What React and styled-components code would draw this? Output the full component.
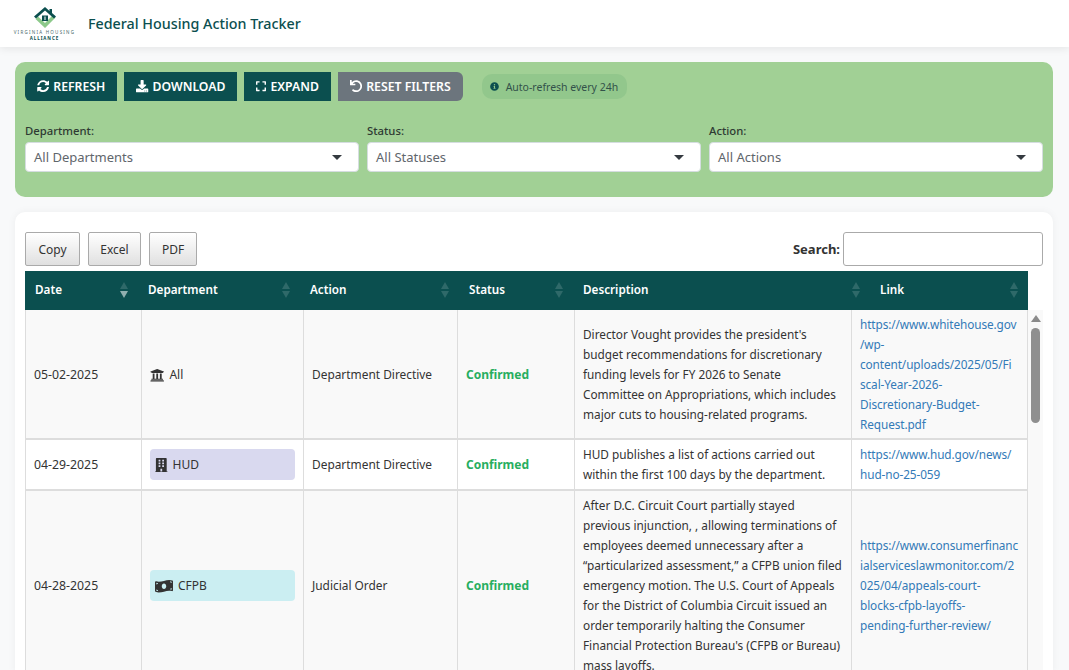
import React from "react";
import styled, { createGlobalStyle } from "styled-components";
import {
  FaSyncAlt,
  FaDownload,
  FaExpand,
  FaUndo,
  FaInfoCircle,
  FaUniversity,
  FaBuilding,
  FaMoneyBillWave,
} from "react-icons/fa";

const GlobalStyle = createGlobalStyle`
  html, body {
    margin: 0;
    height: 100%;
    overflow: hidden;
    background: #f8f9fa;
    font-family: "Noto Sans", "Open Sans", sans-serif;
    color: #212529;
  }
  * { box-sizing: border-box; }
`;

const Page = styled.div`
  height: 670px;
  overflow: hidden;
`;

const Header = styled.header`
  height: 47px;
  background: #fff;
  display: flex;
  align-items: center;
  padding-left: 15px;
  box-shadow: 0 2px 8px rgba(0, 0, 0, 0.08);
`;

const Logo = styled.div`
  width: 59px;
  display: flex;
  flex-direction: column;
  align-items: center;
  margin-right: 14px;
`;

const LogoLine = styled.span`
  font-size: ${(p) => p.$size}px;
  line-height: ${(p) => p.$height}px;
  letter-spacing: ${(p) => p.$spacing}px;
  font-weight: ${(p) => p.$weight};
  color: ${(p) => p.$color};
  white-space: nowrap;
`;

const Title = styled.h1`
  margin: 0 0 1px;
  font-size: 14.3px;
  font-weight: 500;
  color: #0b4f4f;
`;

const Main = styled.main`
  padding: 15px 16px 0 15px;
  display: flex;
  flex-direction: column;
  gap: 15px;
`;

const FilterPanel = styled.section`
  height: 135px;
  background: #a1d095;
  border-radius: 10px;
  padding: 10px;
`;

const Toolbar = styled.div`
  display: flex;
  align-items: center;
  gap: 7px;
`;

const ActionButton = styled.button`
  height: 29px;
  padding: 0 12px;
  display: inline-flex;
  align-items: center;
  gap: 4px;
  border: 0;
  border-radius: ${(p) => p.$radius};
  background: ${(p) => (p.$muted ? "#6c757d" : "#0b4f4f")};
  color: #fff;
  font-family: inherit;
  font-size: 12.25px;
  font-weight: 600;

  svg {
    width: ${(p) => p.$iconWidth || 12.25}px;
    height: 12.25px;
  }
`;

const RefreshNote = styled.div`
  margin-left: 12px;
  height: 25px;
  padding: 0 9px 0 8px;
  display: inline-flex;
  align-items: center;
  gap: 7px;
  border-radius: 10px;
  background: rgba(46, 139, 87, 0.13);
  color: #33524a;
  font-size: 10.5px;

  svg {
    font-size: 9px;
    color: #0b4f4f;
  }
`;

const Filters = styled.div`
  display: grid;
  grid-template-columns: repeat(3, 1fr);
  gap: 8px;
  margin-top: 22px;
`;

const FilterField = styled.label`
  display: flex;
  flex-direction: column;
  font-size: 11.3px;
  font-weight: 500;
  color: #2e3a33;
  gap: 4px;
`;

const SelectBox = styled.div`
  height: 30px;
  padding: 0 8px;
  background: #fff;
  border: 1px solid #d5dde0;
  border-radius: 4px;
  display: flex;
  align-items: center;
  justify-content: space-between;
  color: #5f666c;
  font-size: 13px;
  font-weight: 400;
`;

const Caret = styled.span`
  width: 0;
  height: 0;
  margin-right: 8px;
  border-left: 5px solid transparent;
  border-right: 5px solid transparent;
  border-top: 5px solid #343a40;
`;

const TableCard = styled.section`
  background: #fff;
  border-radius: 10px 10px 0 0;
  padding: 20px 10px 0;
  height: 460px;
  box-shadow: 0 0 8px rgba(0, 0, 0, 0.05);
  overflow: hidden;
`;

const TableTools = styled.div`
  display: flex;
  align-items: center;
  justify-content: space-between;
  height: 34px;
  margin-bottom: 5px;
`;

const ExportGroup = styled.div`
  display: flex;
  gap: 8px;
`;

const ExportButton = styled.button`
  width: ${(p) => p.$width}px;
  height: 34px;
  padding: 0;
  border: 1px solid #aaa;
  border-radius: 2px;
  background: linear-gradient(to bottom, #fff 0%, #e0e0e0 100%);
  color: #333;
  font-family: inherit;
  font-size: 12px;
`;

const SearchLabel = styled.label`
  display: flex;
  align-items: center;
  gap: 3px;
  font-size: 13px;
  font-weight: 700;
  color: #333;
`;

const SearchInput = styled.input`
  width: 200px;
  height: 34px;
  border: 1px solid #aaa;
  border-radius: 3px;
  background: #fff;
`;

const HeadTable = styled.table`
  width: 1003px;
  border-collapse: separate;
  border-spacing: 0;
  table-layout: fixed;
`;

const HeadCell = styled.th`
  position: relative;
  height: 39px;
  padding: 0 10px 3px;
  background: #0b4f4f;
  color: #fff;
  font-size: 11.7px;
  font-weight: 600;
  text-align: left;
`;

const SortArrows = styled.span`
  position: absolute;
  right: 10px;
  top: 11px;
  display: flex;
  flex-direction: column;
  gap: 2px;

  &::before,
  &::after {
    content: "";
    border-left: 4.5px solid transparent;
    border-right: 4.5px solid transparent;
  }
  &::before {
    border-bottom: 7px solid rgba(255, 255, 255, 0.15);
  }
  &::after {
    border-top: 7px solid ${(p) => (p.$active ? "rgba(255, 255, 255, 0.55)" : "rgba(255, 255, 255, 0.15)")};
  }
`;

const ScrollArea = styled.div`
  display: flex;
  align-items: flex-start;
`;

const Table = styled.table`
  width: 1003px;
  flex: none;
  border-collapse: separate;
  border-spacing: 0;
  table-layout: fixed;
  font-size: 11.8px;
`;

const Row = styled.tr`
  height: ${(p) => p.$height}px;
  background: ${(p) => (p.$odd ? "#f9f9f9" : "#fff")};

  td {
    padding-bottom: ${(p) => p.$bottom}px;
  }
`;

const Cell = styled.td`
  padding: 4px 8px;
  border-right: 1px solid #ddd;
  border-bottom: 2px solid #ddd;
  line-height: 20px;
  vertical-align: middle;
  color: #333;
  overflow-wrap: anywhere;

  &:first-child {
    border-left: 1px solid #ddd;
  }
`;

const DateCell = styled(Cell)`
  padding-top: 5px;
  font-size: 12.3px;
`;

const ActionCell = styled(Cell)`
  font-size: 11.9px;
`;

const Confirmed = styled.span`
  color: #27ae60;
  font-size: 12px;
  font-weight: 700;
`;

const DeptTag = styled.div`
  display: flex;
  align-items: center;
  gap: 5px;
  padding: 2px ${(p) => (p.$bg ? "5px" : "0")} 0;
  height: ${(p) => (p.$bg ? "31px" : "auto")};
  border-radius: 4px;
  background: ${(p) => p.$bg || "transparent"};
  font-size: 12px;

  svg {
    width: ${(p) => p.$iconWidth}px;
    height: 14.4px;
    color: #333;
    flex: none;
  }
`;

const ExternalLink = styled.a`
  color: #337ab7;
  letter-spacing: -0.1px;
  text-decoration: none;
  white-space: pre-line;
`;

const Scrollbar = styled.div`
  width: 15px;
  flex: none;
  height: 360px;
  display: flex;
  flex-direction: column;
  align-items: center;
  background: #f9f9f9;
`;

const ScrollUp = styled.span`
  margin-top: 5px;
  border-left: 5px solid transparent;
  border-right: 5px solid transparent;
  border-bottom: 7px solid #8a8a8a;
`;

const ScrollThumb = styled.span`
  margin-top: 6px;
  width: 9px;
  height: 95px;
  border-radius: 5px;
  background: #8f8f8f;
`;

const headColumns = [
  { label: "Date", width: 113, active: true },
  { label: "Department", width: 162 },
  { label: "Action", width: 159 },
  { label: "Status", width: 114 },
  { label: "Description", width: 297 },
  { label: "Link", width: 158 },
];

const bodyWidths = [117, 162, 154, 117, 277, 176];

const rows = [
  {
    date: "05-02-2025",
    dept: "All",
    icon: <FaUniversity />,
    iconWidth: 14.4,
    height: 130,
    bottom: 4,
    action: "Department Directive",
    description:
      "Director Vought provides the president's budget recommendations for discretionary funding levels for FY 2026 to Senate Committee on Appropriations, which includes major cuts to housing-related programs.",
    link: "https://www.whitehouse.gov\n/wp-\ncontent/uploads/2025/05/Fi\nscal-Year-2026-\nDiscretionary-Budget-\nRequest.pdf",
  },
  {
    date: "04-29-2025",
    dept: "HUD",
    bg: "#d9d9ef",
    icon: <FaBuilding />,
    iconWidth: 12.6,
    height: 51,
    bottom: 5,
    action: "Department Directive",
    description:
      "HUD publishes a list of actions carried out within the first 100 days by the department.",
    link: "https://www.hud.gov/news/\nhud-no-25-059",
  },
  {
    date: "04-28-2025",
    dept: "CFPB",
    bg: "#cbeef2",
    icon: <FaMoneyBillWave />,
    iconWidth: 18,
    height: 188,
    bottom: 4,
    action: "Judicial Order",
    description:
      "After D.C. Circuit Court partially stayed previous injunction, , allowing terminations of employees deemed unnecessary after a “particularized assessment,” a CFPB union filed emergency motion. The U.S. Court of Appeals for the District of Columbia Circuit issued an order temporarily halting the Consumer Financial Protection Bureau's (CFPB or Bureau) mass layoffs.",
    link: "https://www.consumerfinancialserviceslawmonitor.com/2025/04/appeals-court-\nblocks-cfpb-layoffs-\npending-further-review/",
  },
];

function LogoMark() {
  return (
    <svg width="30" height="23" viewBox="0 0 30 23">
      <path d="M8 10.5 15 17l8-8 2.5 2.5L15 22 5.500 13z" fill="#8cc98a" />
      <path d="M15 1 4 10.500l2 2 9-8 9 8 2-2-4-3.500V3h-2.500v2z" fill="#0b4f4f" />
      <path d="M12 9.500h6V15h-6z" fill="#0b4f4f" />
      <path d="M14.500 10.500h1V14h-1z" fill="#fff" />
    </svg>
  );
}

export default function App() {
  return (
    <Page>
      <GlobalStyle />
      <Header>
        <Logo>
          <LogoMark />
          <LogoLine $size={4.5} $height={6} $spacing={1.25} $weight={400} $color="#4a6b6b">
            VIRGINIA HOUSING
          </LogoLine>
          <LogoLine $size={4.5} $height={6} $spacing={0.9} $weight={700} $color="#0b4f4f">
            ALLIANCE
          </LogoLine>
        </Logo>
        <Title>Federal Housing Action Tracker</Title>
      </Header>
      <Main>
        <FilterPanel>
          <Toolbar>
            <ActionButton $radius="6px 0 0 6px">
              <FaSyncAlt /> REFRESH
            </ActionButton>
            <ActionButton $radius="0">
              <FaDownload /> DOWNLOAD
            </ActionButton>
            <ActionButton $radius="0" $iconWidth={10}>
              <FaExpand /> EXPAND
            </ActionButton>
            <ActionButton $muted $radius="0 6px 6px 0">
              <FaUndo /> RESET FILTERS
            </ActionButton>
            <RefreshNote>
              <FaInfoCircle /> Auto-refresh every 24h
            </RefreshNote>
          </Toolbar>
          <Filters>
            <FilterField>
              Department:
              <SelectBox>
                All Departments <Caret />
              </SelectBox>
            </FilterField>
            <FilterField>
              Status:
              <SelectBox>
                All Statuses <Caret />
              </SelectBox>
            </FilterField>
            <FilterField>
              Action:
              <SelectBox>
                All Actions <Caret />
              </SelectBox>
            </FilterField>
          </Filters>
        </FilterPanel>
        <TableCard>
          <TableTools>
            <ExportGroup>
              <ExportButton $width={55}>Copy</ExportButton>
              <ExportButton $width={53}>Excel</ExportButton>
              <ExportButton $width={48}>PDF</ExportButton>
            </ExportGroup>
            <SearchLabel>
              Search:
              <SearchInput />
            </SearchLabel>
          </TableTools>
          <HeadTable>
            <colgroup>
              {headColumns.map((c) => (
                <col key={c.label} width={c.width} />
              ))}
            </colgroup>
            <thead>
              <tr>
                {headColumns.map((c) => (
                  <HeadCell key={c.label}>
                    {c.label}
                    <SortArrows $active={c.active} />
                  </HeadCell>
                ))}
              </tr>
            </thead>
          </HeadTable>
          <ScrollArea>
            <Table>
              <colgroup>
                {bodyWidths.map((w, i) => (
                  <col key={i} width={w} />
                ))}
              </colgroup>
              <tbody>
                {rows.map((r, i) => (
                  <Row key={r.date} $odd={i % 2 === 0} $height={r.height} $bottom={r.bottom}>
                    <DateCell>{r.date}</DateCell>
                    <Cell>
                      <DeptTag $bg={r.bg} $iconWidth={r.iconWidth}>
                        {r.icon} {r.dept}
                      </DeptTag>
                    </Cell>
                    <ActionCell>{r.action}</ActionCell>
                    <Cell>
                      <Confirmed>Confirmed</Confirmed>
                    </Cell>
                    <Cell>{r.description}</Cell>
                    <Cell>
                      <ExternalLink href="#">{r.link}</ExternalLink>
                    </Cell>
                  </Row>
                ))}
              </tbody>
            </Table>
            <Scrollbar>
              <ScrollUp />
              <ScrollThumb />
            </Scrollbar>
          </ScrollArea>
        </TableCard>
      </Main>
    </Page>
  );
}
